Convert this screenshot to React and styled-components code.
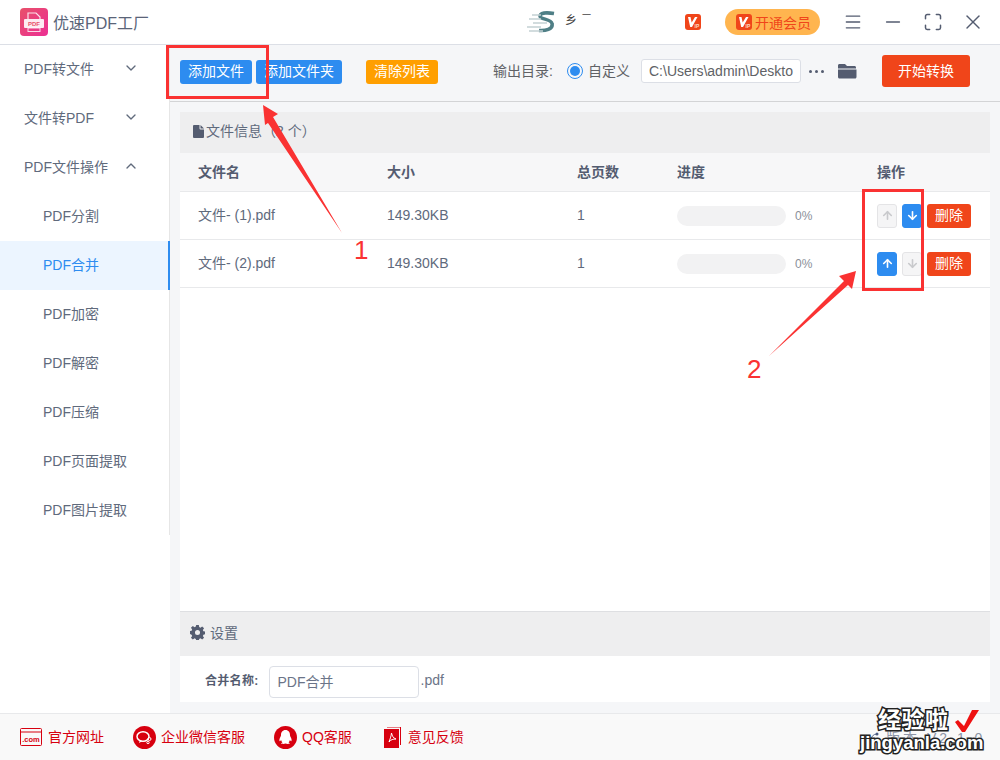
import React from "react";
import styled, { createGlobalStyle } from "styled-components";
import { ChevronDown, ChevronUp, ArrowUp, ArrowDown, Menu, Minus, Maximize, X } from "lucide-react";

const GlobalStyle = createGlobalStyle`
  html, body { margin: 0; padding: 0; background: #fff; }
  body { font-family: "Liberation Sans", "Noto Sans CJK SC", sans-serif; color: #606266; }
  * { box-sizing: border-box; }
`;

const Page = styled.div`
  position: relative;
  width: 1000px;
  height: 760px;
  overflow: hidden;
  display: flex;
  flex-direction: column;
`;

const TitleBar = styled.div`
  height: 45px;
  flex: none;
  display: flex;
  align-items: center;
  border-bottom: 1px solid #dcdfe6;
  padding-left: 20px;
  background: #fff;
`;

const AppName = styled.div`
  margin-left: 5px;
  width: 96px;
  font-size: 16px;
  white-space: nowrap;
  color: #5a6478;
`;

const CenterLogo = styled.div`
  margin-left: 378px;
  display: flex;
  align-items: flex-start;
  width: 90px;
  color: #444;
`;

const BrandScrap = styled.span`
  margin: 3px 0 0 10px;
  width: 17px;
  font-size: 12px;
  line-height: 14px;
`;

const BrandDash = styled.span`
  font-size: 9px;
  line-height: 9px;
`;

const TitleVip = styled.div`
  margin-left: 68px;
  display: flex;
`;

const MemberButton = styled.div`
  margin-left: 24px;
  width: 95px;
  height: 26px;
  border-radius: 13px;
  background: #ffb54f;
  color: #f0451a;
  font-size: 14px;
  display: flex;
  align-items: center;
  padding-left: 11px;
  gap: 3px;
`;

const WindowButtons = styled.div`
  margin-left: 13px;
  display: flex;
  align-items: center;
  color: #545c70;
`;

const WindowButton = styled.div`
  width: 40px;
  display: flex;
  justify-content: center;
`;

const Body = styled.div`
  flex: 1;
  display: flex;
  min-height: 0;
`;

const Sidebar = styled.div`
  width: 170px;
  flex: none;
  background: #fff;
`;

const SideList = styled.div`
  border-right: 1px solid #e6e6e6;
`;

const SideItem = styled.div`
  height: 49px;
  display: flex;
  align-items: center;
  justify-content: space-between;
  padding: 0 30px 3px ${(p) => (p.$sub ? "43px" : "24px")};
  font-size: 14px;
  color: ${(p) => (p.$active ? "#2d8cf0" : "#606a7c")};
  background: ${(p) => (p.$active ? "#ecf5ff" : "#fff")};
  border-right: ${(p) => (p.$active ? "2px solid #2d8cf0" : "none")};
  margin-right: ${(p) => (p.$active ? "-1px" : "0")};
`;

const Main = styled.div`
  flex: 1;
  min-width: 0;
  display: flex;
  flex-direction: column;
  background: #f5f6f8;
`;

const Toolbar = styled.div`
  height: 57px;
  flex: none;
  display: flex;
  align-items: center;
  padding: 0 0 2px 10px;
  border-bottom: 1px solid #d3d4d6;
`;

const ToolButton = styled.div`
  height: 24px;
  padding: 0 8px;
  border-radius: 3px;
  margin-left: ${(p) => p.$gap || 0}px;
  background: ${(p) => p.$color};
  color: #fff;
  font-size: 14px;
  line-height: 23px;
  white-space: nowrap;
`;

const OutputGroup = styled.div`
  display: flex;
  align-items: center;
  margin-top: -2px;
`;

const OutputLabel = styled.div`
  margin-left: 55px;
  width: 60px;
  padding-bottom: 2px;
  font-size: 14px;
  color: #606266;
  white-space: nowrap;
`;

const Radio = styled.div`
  margin-left: 14px;
  width: 16px;
  height: 16px;
  border-radius: 50%;
  border: 1px solid #2d8cf0;
  padding: 2px;
  &::after {
    content: "";
    display: block;
    width: 10px;
    height: 10px;
    border-radius: 50%;
    background: #2d8cf0;
  }
`;

const RadioLabel = styled.div`
  margin-left: 5px;
  width: 42px;
  padding-bottom: 2px;
  font-size: 14px;
  color: #606266;
`;

const PathInput = styled.div`
  margin-left: 11px;
  width: 160px;
  height: 24px;
  padding-left: 7px;
  background: #fff;
  border: 1px solid #dcdfe6;
  border-radius: 3px;
  font-size: 14px;
  line-height: 22px;
  color: #606266;
  white-space: nowrap;
  overflow: hidden;
`;

const Dots = styled.div`
  margin-left: 8px;
  display: flex;
  gap: 3px;
  span {
    width: 3px;
    height: 3px;
    border-radius: 50%;
    background: #545c70;
  }
`;

const FolderBox = styled.div`
  margin-left: 13px;
  display: flex;
`;

const StartButton = styled.div`
  margin-left: 25px;
  width: 88px;
  height: 32px;
  border-radius: 3px;
  background: #f0451a;
  color: #fff;
  font-size: 14px;
  line-height: 32px;
  text-align: center;
`;

const Content = styled.div`
  flex: 1;
  min-height: 0;
  padding: 10px 10px 11px;
  display: flex;
  flex-direction: column;
`;

const Panel = styled.div`
  flex: 1;
  min-height: 0;
  display: flex;
  flex-direction: column;
  background: #fff;
`;

const SectionHead = styled.div`
  height: ${(p) => p.$h}px;
  flex: none;
  display: flex;
  align-items: center;
  gap: ${(p) => p.$gap}px;
  padding: 0 0 3px ${(p) => p.$pad}px;
  background: #eeeeef;
  font-size: 14px;
  color: #606a7c;
  border-top: ${(p) => (p.$line ? "1px solid #dedfe2" : "none")};
`;

const SectionTitle = styled.span`
  margin-bottom: 2px;
`;

const Table = styled.div`
  flex: 1;
  min-height: 0;
`;

const Row = styled.div`
  height: ${(p) => (p.$head ? 39 : 48)}px;
  display: grid;
  grid-template-columns: 189px 190px 100px 200px 1fr;
  align-items: center;
  padding-left: 18px;
  font-size: 14px;
  color: #606a7c;
  background: ${(p) => (p.$head ? "#f7f7f8" : "#fff")};
  border-bottom: 1px solid #e8e9eb;
`;

const HeadCell = styled.div`
  font-weight: 700;
  color: #545c70;
  margin-bottom: 3px;
`;

const Cell = styled.div`
  margin-bottom: ${(p) => (p.$cjk ? 3 : 1)}px;
`;

const Progress = styled.div`
  display: flex;
  align-items: center;
  gap: 9px;
  font-size: 12px;
  color: #8a8f99;
`;

const Track = styled.div`
  width: 109px;
  height: 20px;
  border-radius: 10px;
  background: #f2f2f3;
`;

const Actions = styled.div`
  display: flex;
  align-items: center;
`;

const ArrowButton = styled.div`
  width: 20px;
  height: 24px;
  margin-right: 5px;
  border-radius: 3px;
  display: flex;
  align-items: center;
  justify-content: center;
  color: ${(p) => (p.$on ? "#fff" : "#c8c9cc")};
  background: ${(p) => (p.$on ? "#2d8cf0" : "#f5f5f6")};
  border: 1px solid ${(p) => (p.$on ? "#2d8cf0" : "#e4e4e6")};
`;

const DeleteButton = styled.div`
  width: 44px;
  height: 24px;
  border-radius: 3px;
  background: #f0451a;
  color: #fff;
  font-size: 14px;
  line-height: 22px;
  text-align: center;
`;

const SettingsBody = styled.div`
  height: 46px;
  flex: none;
  display: flex;
  align-items: center;
  padding-left: 25px;
`;

const FieldLabel = styled.div`
  font-size: 12px;
  font-weight: 700;
  color: #545c70;
  letter-spacing: 0.3px;
`;

const NameInput = styled.div`
  margin-left: 10px;
  margin-top: 6px;
  width: 150px;
  height: 32px;
  padding-left: 8px;
  border: 1px solid #dcdfe6;
  border-radius: 4px;
  font-size: 14px;
  line-height: 31px;
  color: #6b7488;
`;

const Suffix = styled.div`
  margin: 2px 0 0 2px;
  font-size: 14px;
  color: #6b7488;
`;

const Footer = styled.div`
  height: 47px;
  flex: none;
  display: flex;
  align-items: center;
  padding-left: 20px;
  background: #f9f9f9;
  border-top: 1px solid #e8e9eb;
`;

const FooterLink = styled.div`
  display: flex;
  align-items: center;
  gap: ${(p) => p.$gap}px;
  margin-right: ${(p) => p.$mr}px;
  font-size: 14px;
  color: #d7000f;
  white-space: nowrap;
`;

const FooterText = styled.span`
  margin-bottom: 3px;
`;

const Version = styled.div`
  position: absolute;
  left: 869px;
  top: 727px;
  display: flex;
  align-items: center;
  gap: 3px;
  font-size: 14px;
  letter-spacing: 3px;
  color: #8d95a6;
`;

const Watermark = styled.div`
  position: absolute;
  left: 860px;
  top: 707px;
  width: 140px;
  color: #fff;
  font-weight: 700;
  -webkit-text-stroke: 3px #222;
  paint-order: stroke fill;
`;

const WatermarkCn = styled.div`
  margin-left: 18px;
  font-size: 23px;
  line-height: 26px;
  letter-spacing: 0.5px;
`;

const WatermarkEn = styled.div`
  font-size: 18.5px;
  line-height: 20px;
`;

const Overlay = styled.svg`
  position: absolute;
  left: 0;
  top: 0;
  pointer-events: none;
`;

const MarkNumber = styled.div`
  position: absolute;
  left: ${(p) => p.$x}px;
  top: ${(p) => p.$y}px;
  font-size: 26px;
  line-height: 30px;
  color: #fa3232;
`;

const AppLogo = () => (
  <svg width="28" height="28" viewBox="0 0 28 28">
    <defs>
      <linearGradient id="lg" x1="0" y1="0" x2="1" y2="1">
        <stop offset="0" stopColor="#e8506a" />
        <stop offset="1" stopColor="#ec2f94" />
      </linearGradient>
    </defs>
    <rect width="28" height="28" rx="4" fill="url(#lg)" />
    <path d="M8 11V5h8l4 4v2" fill="none" stroke="#fff" strokeWidth="1.2" opacity="0.85" />
    <rect x="4" y="11" width="20" height="9" rx="1" fill="#fff" opacity="0.9" />
    <rect x="8" y="20" width="12" height="3.5" fill="none" stroke="#fff" strokeWidth="1" opacity="0.8" />
    <text x="14" y="18" textAnchor="middle" fontSize="6" fontWeight="700" fill="#e8506a" fontFamily="Liberation Sans">PDF</text>
  </svg>
);

const SwooshLogo = () => (
  <svg width="28" height="22" viewBox="0 0 28 22">
    <path d="M27 2.500c-6-1-13-1-14 2-1 4 11 3 12 8 1.500 6-7 7.500-13 7" fill="none" stroke="#4f7f86" strokeWidth="3.500" />
    <path d="M5 4h9M2 8h12M6 12h14M0 16h14M2 20h14" stroke="#c3d1d4" strokeWidth="1.600" />
  </svg>
);

const VipBadge = ({ size }) => (
  <svg width={size} height={size} viewBox="0 0 16 16">
    <rect width="16" height="16" rx="3" fill="#f0451a" />
    <path d="M3 3h2.500l1.200 5.500L10 3h2.500L7 13H5.200z" fill="#fff" />
    <text x="9.500" y="13.500" fontSize="5" fontWeight="700" fill="#ffd9c8" fontFamily="Liberation Sans">IP</text>
  </svg>
);

const FolderIcon = () => (
  <svg width="20" height="18" viewBox="0 0 20 18">
    <path d="M1 3.500C1 2.600 1.600 2 2.500 2H8l2 2h7.500c.9 0 1.500.6 1.500 1.500v1H1z" fill="#545c70" />
    <path d="M1 7.500h18.500v7.500c0 .9-.6 1.500-1.500 1.500H2.500C1.600 16.500 1 15.900 1 15z" fill="#545c70" />
  </svg>
);

const FileIcon = () => (
  <svg width="11" height="13" viewBox="0 0 11 13">
    <path d="M1 0h5.500v3.500a1 1 0 0 0 1 1H11V12a1 1 0 0 1-1 1H1a1 1 0 0 1-1-1V1a1 1 0 0 1 1-1z" fill="#545c70" />
    <path d="M7.500 0 11 3.500H7.500z" fill="#545c70" />
  </svg>
);

const GearIcon = () => (
  <svg width="15" height="15" viewBox="0 0 16 16">
    <path
      fillRule="evenodd"
      d="M6.600 0h2.800l.4 2.200 1.300.6 1.900-1.300 2 2-1.300 1.900.6 1.300 2.200.4v2.800l-2.200.4-.6 1.300 1.300 1.900-2 2-1.900-1.300-1.300.6-.4 2.200H6.600l-.4-2.200-1.300-.6-1.900 1.300-2-2 1.300-1.900-.6-1.300L-.5 9.400V6.600l2.200-.4.6-1.300L1 3l2-2 1.900 1.300 1.300-.6zM8 5.300a2.700 2.700 0 1 0 0 5.400 2.700 2.700 0 0 0 0-5.400z"
      fill="#545c70"
    />
  </svg>
);

const ComIcon = () => (
  <svg width="22" height="18" viewBox="0 0 22 18">
    <rect x="0.500" y="0.500" width="21" height="17" rx="1" fill="none" stroke="#d7000f" />
    <path d="M1 4h20" stroke="#d7000f" />
    <text x="11" y="14" textAnchor="middle" fontSize="7.500" fontWeight="700" fill="#d7000f" fontFamily="Liberation Sans">.com</text>
  </svg>
);

const WechatIcon = () => (
  <svg width="23" height="23" viewBox="0 0 23 23">
    <circle cx="11.500" cy="11.500" r="11.500" fill="#d7000f" />
    <ellipse cx="10" cy="10.500" rx="6" ry="4.800" fill="none" stroke="#fff" strokeWidth="1.500" />
    <path d="M7 14l-1 3 3.500-2z" fill="#fff" />
    <circle cx="16.500" cy="13" r="1.500" fill="none" stroke="#fff" />
    <circle cx="15" cy="16.500" r="1.200" fill="none" stroke="#fff" />
  </svg>
);

const QqIcon = () => (
  <svg width="23" height="23" viewBox="0 0 23 23">
    <circle cx="11.500" cy="11.500" r="11.500" fill="#d7000f" />
    <path d="M11.500 4c3 0 4.500 2.400 4.500 5 0 1 .4 1.600 1 2.800.8 1.700.8 3.200.2 3.400-.4.100-.9-.4-1.300-1.100-.1 1-.6 1.800-1.300 2.400.8.300 1.300.7 1.100 1.100-.3.500-3 .5-4.200 0-1.200.5-3.900.5-4.200 0-.2-.4.300-.8 1.100-1.100-.7-.6-1.200-1.400-1.300-2.400-.4.700-.9 1.200-1.300 1.100-.6-.2-.6-1.700.2-3.400.6-1.200 1-1.800 1-2.800 0-2.600 1.500-5 4.500-5z" fill="#fff" />
  </svg>
);

const FeedbackIcon = () => (
  <svg width="17" height="21" viewBox="0 0 17 21">
    <path d="M3 0h13.500v18" fill="none" stroke="#d7000f" />
    <path d="M0 2h15v19H0z" fill="#d7000f" />
    <path d="M7.500 6c.8 3 1.500 5 4.500 6-3 0-5 .5-7 3 1-3 2-5 2.500-9z" fill="none" stroke="#fff" strokeWidth="1" />
  </svg>
);

const VersionIcon = () => (
  <svg width="14" height="14" viewBox="0 0 14 14">
    <path d="M2 11a6 6 0 0 1 6-7" fill="none" stroke="#5b6b8c" strokeWidth="1" />
    <circle cx="8" cy="4" r="1.500" fill="#4a5a80" />
  </svg>
);

const menu = [
  { label: "PDF转文件", caret: "down" },
  { label: "文件转PDF", caret: "down" },
  { label: "PDF文件操作", caret: "up" },
  { label: "PDF分割", sub: true },
  { label: "PDF合并", sub: true, active: true },
  { label: "PDF加密", sub: true },
  { label: "PDF解密", sub: true },
  { label: "PDF压缩", sub: true },
  { label: "PDF页面提取", sub: true },
  { label: "PDF图片提取", sub: true },
];

const files = [
  { name: "文件- (1).pdf", up: false, down: true },
  { name: "文件- (2).pdf", up: true, down: false },
];

const App = () => (
  <Page>
    <GlobalStyle />
    <TitleBar>
      <AppLogo />
      <AppName>优速PDF工厂</AppName>
      <CenterLogo>
        <SwooshLogo />
        <BrandScrap>乡</BrandScrap>
        <BrandDash>一</BrandDash>
      </CenterLogo>
      <TitleVip>
        <VipBadge size={16} />
      </TitleVip>
      <MemberButton>
        <VipBadge size={16} />
        开通会员
      </MemberButton>
      <WindowButtons>
        <WindowButton><Menu size={20} strokeWidth={1.6} /></WindowButton>
        <WindowButton><Minus size={22} strokeWidth={1.5} /></WindowButton>
        <WindowButton><Maximize size={20} strokeWidth={1.8} /></WindowButton>
        <WindowButton><X size={24} strokeWidth={1.4} /></WindowButton>
      </WindowButtons>
    </TitleBar>
    <Body>
      <Sidebar>
        <SideList>
          {menu.map((m) => (
            <SideItem key={m.label} $sub={m.sub} $active={m.active}>
              {m.label}
              {m.caret === "down" && <ChevronDown size={16} color="#606a7c" />}
              {m.caret === "up" && <ChevronUp size={16} color="#606a7c" />}
            </SideItem>
          ))}
        </SideList>
      </Sidebar>
      <Main>
        <Toolbar>
          <ToolButton $color="#2d8cf0">添加文件</ToolButton>
          <ToolButton $color="#2d8cf0" $gap={4}>添加文件夹</ToolButton>
          <ToolButton $color="#ff9f00" $gap={24}>清除列表</ToolButton>
          <OutputGroup>
            <OutputLabel>输出目录:</OutputLabel>
            <Radio />
            <RadioLabel>自定义</RadioLabel>
            <PathInput>C:\Users\admin\Deskto</PathInput>
            <Dots>
              <span />
              <span />
              <span />
            </Dots>
            <FolderBox>
              <FolderIcon />
            </FolderBox>
            <StartButton>开始转换</StartButton>
          </OutputGroup>
        </Toolbar>
        <Content>
          <Panel>
            <SectionHead $h={41} $gap={2} $pad={13}>
              <FileIcon />
              <SectionTitle>文件信息（2 个）</SectionTitle>
            </SectionHead>
            <Table>
              <Row $head>
                <HeadCell>文件名</HeadCell>
                <HeadCell>大小</HeadCell>
                <HeadCell>总页数</HeadCell>
                <HeadCell>进度</HeadCell>
                <HeadCell>操作</HeadCell>
              </Row>
              {files.map((f) => (
                <Row key={f.name}>
                  <Cell $cjk>{f.name}</Cell>
                  <Cell>149.30KB</Cell>
                  <Cell>1</Cell>
                  <Progress>
                    <Track />
                    0%
                  </Progress>
                  <Actions>
                    <ArrowButton $on={f.up}>
                      <ArrowUp size={13} strokeWidth={3} />
                    </ArrowButton>
                    <ArrowButton $on={f.down}>
                      <ArrowDown size={13} strokeWidth={3} />
                    </ArrowButton>
                    <DeleteButton>删除</DeleteButton>
                  </Actions>
                </Row>
              ))}
            </Table>
            <SectionHead $h={45} $gap={5} $pad={10} $line>
              <GearIcon />
              <SectionTitle>设置</SectionTitle>
            </SectionHead>
            <SettingsBody>
              <FieldLabel>合并名称:</FieldLabel>
              <NameInput>PDF合并</NameInput>
              <Suffix>.pdf</Suffix>
            </SettingsBody>
          </Panel>
        </Content>
      </Main>
    </Body>
    <Footer>
      <FooterLink $gap={6} $mr={29}>
        <ComIcon />
        <FooterText>官方网址</FooterText>
      </FooterLink>
      <FooterLink $gap={5} $mr={29}>
        <WechatIcon />
        <FooterText>企业微信客服</FooterText>
      </FooterLink>
      <FooterLink $gap={5} $mr={32}>
        <QqIcon />
        <FooterText>QQ客服</FooterText>
      </FooterLink>
      <FooterLink $gap={7} $mr={0}>
        <FeedbackIcon />
        <FooterText>意见反馈</FooterText>
      </FooterLink>
    </Footer>
    <Version>
      <VersionIcon />
      版本 V2.1.0
    </Version>
    <Watermark>
      <WatermarkCn>经验啦</WatermarkCn>
      <WatermarkEn>jingyanla.com</WatermarkEn>
    </Watermark>
    <Overlay width="1000" height="760" viewBox="0 0 1000 760">
      <path d="M955 722l3-2 6 6 8-16h7l-14 22h-3z" fill="#ee1111" />
      <rect x="167.500" y="46.500" width="100" height="51" fill="none" stroke="#fa3232" strokeWidth="3" />
      <rect x="863.500" y="190.500" width="59" height="99" fill="none" stroke="#fa3232" strokeWidth="3" />
      <path d="M263 105l15 9-5 3 69 116-74-110-3 2z" fill="#fa3232" />
      <path d="M856 271l-17 5 5 5-75 75 79-71 4 4z" fill="#fa3232" />
    </Overlay>
    <MarkNumber $x={354} $y={235}>1</MarkNumber>
    <MarkNumber $x={747} $y={354}>2</MarkNumber>
  </Page>
);

export default App;
